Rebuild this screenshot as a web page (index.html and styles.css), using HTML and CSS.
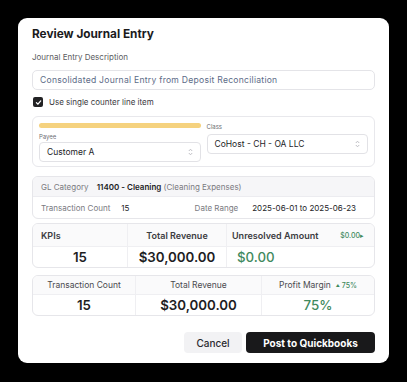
FILE: index.html
```html
<!DOCTYPE html>
<html lang="en">
<head>
  <meta charset="utf-8">
  <meta name="viewport" content="width=device-width, initial-scale=1.0">
  <title>Review Journal Entry</title>
  <link rel="stylesheet" href="styles.css">
</head>
<body>
  <div class="modal">
    <h2 class="modal-title">Review Journal Entry</h2>

    <label class="field-label" for="description">Journal Entry Description</label>
    <div class="text-input" id="description">Consolidated Journal Entry from Deposit Reconciliation</div>

    <label class="check-row">
      <span class="checkbox">
        <svg width="7" height="7" viewBox="0 0 10 10"><path d="M2 5.2 4.2 7.4 8.2 2.8" fill="none" stroke="#fff" stroke-width="1.8" stroke-linecap="round" stroke-linejoin="round"/></svg>
      </span>
      Use single counter line item
    </label>

    <div class="party-box">
      <div class="party-col">
        <div class="progress-bar"></div>
        <div class="mini-label">Payee</div>
        <div class="select select-payee">
          <span>Customer A</span>
          <svg class="chevrons" width="5" height="8" viewBox="0 0 5 8"><path d="M0.8 3 2.5 1.2 4.2 3M0.8 5 2.5 6.8 4.2 5" fill="none" stroke="#b9b9be" stroke-width="0.9"/></svg>
        </div>
      </div>
      <div class="party-col">
        <div class="mini-label">Class</div>
        <div class="select select-class">
          <span>CoHost - CH - OA LLC</span>
          <svg class="chevrons" width="5" height="8" viewBox="0 0 5 8"><path d="M0.8 3 2.5 1.2 4.2 3M0.8 5 2.5 6.8 4.2 5" fill="none" stroke="#b9b9be" stroke-width="0.9"/></svg>
        </div>
      </div>
    </div>

    <div class="gl-box">
      <div class="gl-head">
        <span class="muted">GL Category</span>
        <span class="gl-name"><b>11400 - Cleaning</b> <span class="muted">(Cleaning Expenses)</span></span>
      </div>
      <div class="gl-row">
        <span class="muted">Transaction Count</span>
        <span class="gl-count">15</span>
        <span class="muted gl-range-label">Date Range</span>
        <span>2025-06-01 to 2025-06-23</span>
      </div>
    </div>

    <div class="kpi-box kpi-primary">
      <div class="kpi-head kpi-left">KPIs</div>
      <div class="kpi-head">Total Revenue</div>
      <div class="kpi-head kpi-split">Unresolved Amount <span class="kpi-badge">$0.00&#9656;</span></div>
      <div class="kpi-value">15</div>
      <div class="kpi-value">$30,000.00</div>
      <div class="kpi-value kpi-green kpi-start">$0.00</div>
    </div>

    <div class="kpi-box kpi-secondary">
      <div class="kpi-head">Transaction Count</div>
      <div class="kpi-head">Total Revenue</div>
      <div class="kpi-head">Profit Margin <span class="kpi-badge"><span class="tri">&#9650;</span>75%</span></div>
      <div class="kpi-value">15</div>
      <div class="kpi-value">$30,000.00</div>
      <div class="kpi-value kpi-green">75%</div>
    </div>

    <div class="actions">
      <button class="btn btn-cancel">Cancel</button>
      <button class="btn btn-post">Post to Quickbooks</button>
    </div>
  </div>
</body>
</html>
```

FILE: styles.css
```css
* {
  box-sizing: border-box;
}

body {
  margin: 0;
  padding: 18px 0 0 18px;
  background: #000;
  font-family: Inter, "Noto Sans", sans-serif;
  color: #1d1d1f;
}

.modal {
  width: 371px;
  padding: 8px 14px 10px;
  background: #fff;
  border-radius: 9px;
}

.modal-title {
  margin: 0;
  font-size: 11.8px;
  line-height: 16px;
  font-weight: 700;
  color: #1b1b1d;
}

.field-label {
  display: block;
  margin-top: 10px;
  font-size: 8px;
  line-height: 10px;
  color: #5c5c61;
}

.text-input {
  margin-top: 8px;
  height: 20px;
  padding: 0 7px;
  border: 1px solid #e4e4e8;
  border-radius: 5px;
  font-size: 8.6px;
  letter-spacing: 0.25px;
  line-height: 18px;
  color: #5d6c88;
}

.check-row {
  display: flex;
  align-items: center;
  gap: 6px;
  margin-top: 7px;
  height: 10px;
  padding-left: 1px;
  font-size: 8px;
  color: #3a3a3e;
}

.checkbox {
  display: flex;
  align-items: center;
  justify-content: center;
  width: 10px;
  height: 10px;
  background: #222224;
  border-radius: 2px;
}

.party-box {
  display: flex;
  gap: 6px;
  align-items: flex-start;
  margin-top: 9px;
  padding: 6px 6px 4px;
  border: 1px solid #e8e8ec;
  border-radius: 6px;
}

.party-col {
  flex: 1;
}

.progress-bar {
  height: 5px;
  background: #f5d27f;
  border-radius: 3px;
}

.mini-label {
  font-size: 6px;
  line-height: 8px;
  color: #6e6e73;
}

.party-col .progress-bar + .mini-label {
  margin-top: 5px;
}

.select {
  display: flex;
  align-items: center;
  justify-content: space-between;
  height: 20px;
  padding: 0 7px;
  border: 1px solid #e2e2e6;
  border-radius: 4px;
  font-size: 8.5px;
  color: #1d1d1f;
}

.select-payee {
  margin-top: 1px;
}

.select-class {
  margin-top: 3px;
}

.gl-box {
  margin-top: 9px;
  border: 1px solid #e6e6ea;
  border-radius: 6px;
  overflow: hidden;
  font-size: 8px;
}

.gl-head {
  display: flex;
  align-items: center;
  gap: 8px;
  height: 20px;
  padding: 0 8px;
  background: #f6f6f8;
  border-bottom: 1px solid #ececf0;
}

.gl-name b {
  font-weight: 600;
  color: #1d1d1f;
}

.gl-row {
  display: flex;
  align-items: center;
  height: 21px;
  padding: 0 18px 0 8px;
}

.gl-count {
  margin-left: 11px;
}

.gl-range-label {
  margin-left: auto;
  margin-right: 14px;
}

.muted {
  color: #7a7a7f;
}

.kpi-box {
  display: grid;
  border: 1px solid #e6e6ea;
  border-radius: 6px;
  overflow: hidden;
}

.kpi-primary {
  margin-top: 4px;
  grid-template-columns: 94px 99px 1fr;
  grid-template-rows: 23px 20px;
}

.kpi-secondary {
  margin-top: 7px;
  grid-template-columns: 102px 126px 1fr;
  grid-template-rows: 19px 20px;
}

.kpi-head {
  display: flex;
  align-items: center;
  justify-content: center;
  gap: 5px;
  background: #fafafb;
  border-bottom: 1px solid #efeff2;
  font-size: 8.5px;
  color: #4a4a4f;
}

.kpi-primary .kpi-head {
  font-weight: 600;
  font-size: 9px;
  color: #3c3c41;
}

.kpi-left {
  justify-content: flex-start;
  padding-left: 8px;
}

.kpi-split {
  justify-content: space-between;
  padding: 0 10px 0 5px;
}

.kpi-badge {
  font-size: 7px;
  font-weight: 500;
  color: #3f8a5e;
}

.tri {
  font-size: 4px;
  vertical-align: 1px;
  margin-right: 2px;
}

.kpi-value {
  display: flex;
  align-items: center;
  justify-content: center;
  font-size: 13.3px;
  font-weight: 600;
  color: #1d1d1f;
}

.kpi-head + .kpi-head,
.kpi-value + .kpi-value {
  border-left: 1px solid #efeff2;
}

.kpi-green {
  font-weight: 500;
  color: #3f8a5e;
}

.kpi-start {
  justify-content: flex-start;
  padding-left: 10px;
}

.actions {
  display: flex;
  justify-content: flex-end;
  gap: 4px;
  margin-top: 16px;
}

.btn {
  height: 21px;
  border: none;
  border-radius: 4px;
  font-family: Inter, "Noto Sans", sans-serif;
  font-size: 10px;
  cursor: pointer;
}

.btn-cancel {
  width: 58px;
  background: #f2f2f4;
  color: #2a2a2e;
  font-weight: 500;
}

.btn-post {
  width: 129px;
  background: #19191b;
  color: #fff;
  font-weight: 700;
}
```
